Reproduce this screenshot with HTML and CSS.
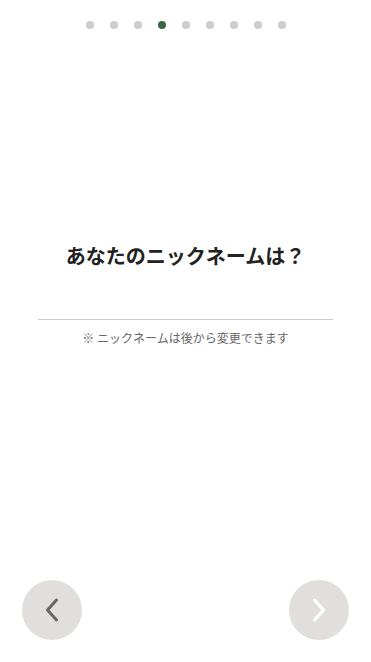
FILE: index.html
```html
<!DOCTYPE html>
<html lang="ja">
<head>
<meta charset="utf-8">
<link rel="stylesheet" href="styles.css">
</head>
<body>
<div class="page">
  <div class="dots">
    <span class="dot"></span><span class="dot"></span><span class="dot"></span>
    <span class="dot active"></span><span class="dot"></span><span class="dot"></span>
    <span class="dot"></span><span class="dot"></span><span class="dot"></span>
  </div>
  <div class="content">
    <h1 class="title">あなたのニックネームは？</h1>
    <input class="field" type="text" aria-label="ニックネーム">
    <p class="note">※ ニックネームは後から変更できます</p>
  </div>
  <div class="nav">
    <button class="navbtn prev" aria-label="戻る">
      <svg width="14" height="24" viewBox="0 0 14 24"><path d="M11.5 2 L2.5 12 L11.5 22" fill="none" stroke="#666" stroke-width="3" stroke-linecap="round" stroke-linejoin="round"/></svg>
    </button>
    <button class="navbtn next" aria-label="次へ">
      <svg width="14" height="24" viewBox="0 0 14 24"><path d="M2.5 2 L11.5 12 L2.5 22" fill="none" stroke="#fff" stroke-width="3" stroke-linecap="round" stroke-linejoin="round"/></svg>
    </button>
  </div>
</div>
</body>
</html>
```
FILE: styles.css
```css
html, body {
  margin: 0;
  padding: 0;
  background: #fff;
}
body {
  font-family: "Noto Sans CJK JP", "Noto Sans", sans-serif;
  color: #222;
}
.page {
  height: 662px;
  display: flex;
  flex-direction: column;
}
.dots {
  display: flex;
  justify-content: center;
  gap: 16px;
  padding-top: 21px;
}
.dot {
  width: 8px;
  height: 8px;
  border-radius: 50%;
  background: #cccccc;
}
.dot.active {
  background: #3b6442;
}
.content {
  display: flex;
  flex-direction: column;
  align-items: center;
  margin-top: 213px;
  padding: 0 38px;
}
.title {
  margin: 0;
  font-size: 20px;
  line-height: 28px;
  font-weight: 700;
  color: #222;
}
.field {
  box-sizing: border-box;
  width: 100%;
  height: 41px;
  margin-top: 9px;
  border: 0;
  border-bottom: 1px solid #cccccc;
  outline: none;
  background: transparent;
}
.note {
  margin: 9px 0 0;
  font-size: 12px;
  line-height: 18px;
  color: #666;
}
.nav {
  margin-top: auto;
  display: flex;
  justify-content: space-between;
  padding: 0 22px 22px;
}
.navbtn {
  width: 60px;
  height: 60px;
  border-radius: 50%;
  border: 0;
  padding: 0;
  background: #e0dfdd;
  display: flex;
  align-items: center;
  justify-content: center;
}
```
